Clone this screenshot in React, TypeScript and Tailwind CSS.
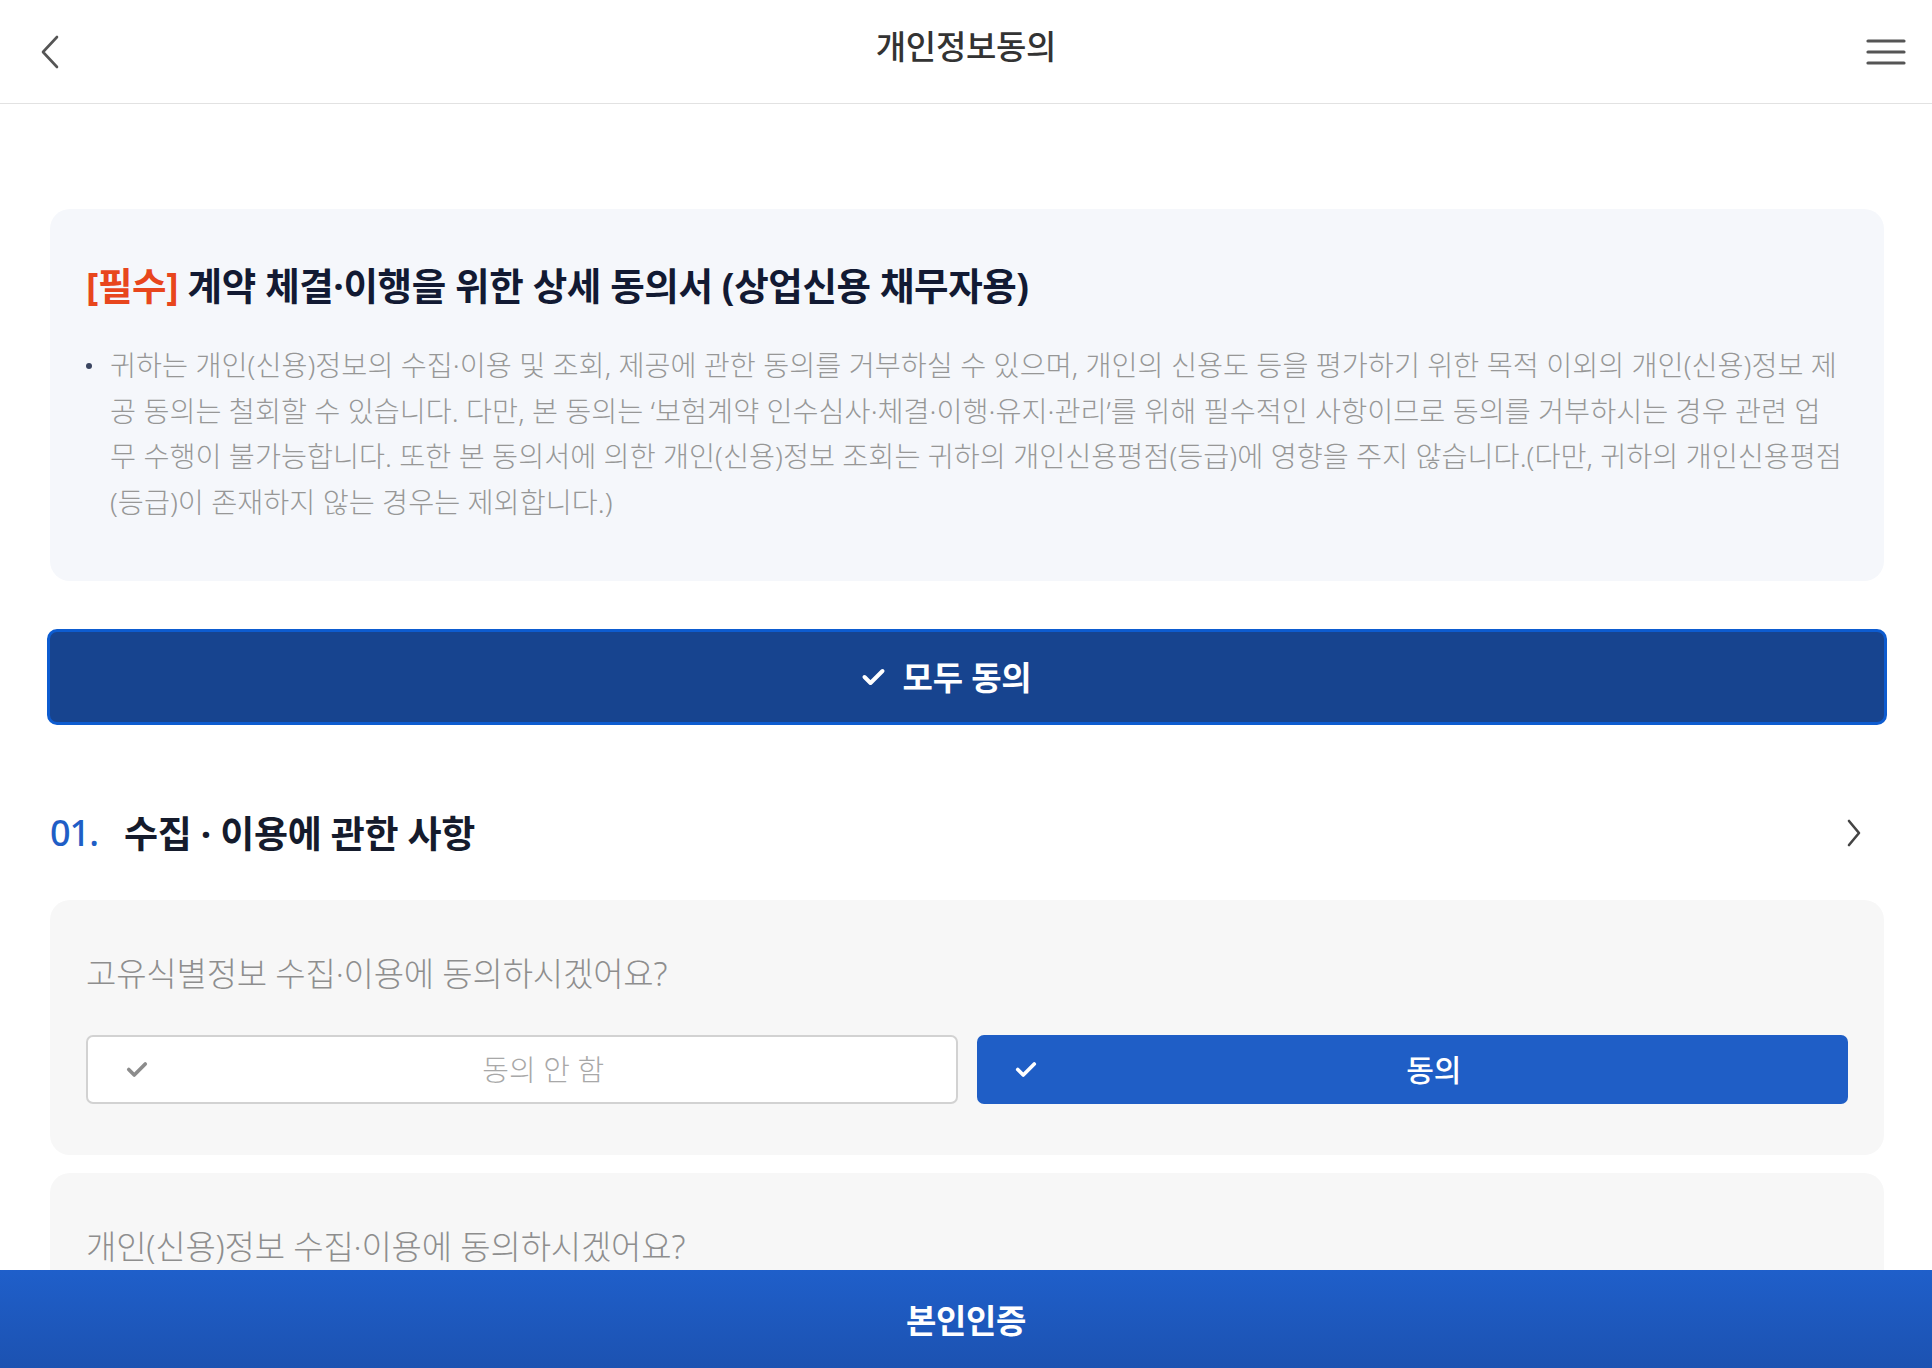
import React from 'react';

const font = "font-['Noto_Sans','Noto_Sans_CJK_KR',sans-serif]";

function CheckIcon({ className }: { className?: string }) {
    return (
        <svg className={className} viewBox="0 0 24 18" fill="none" stroke="currentColor" strokeWidth="4" strokeLinecap="round" strokeLinejoin="round">
            <polyline points="3,9 9,15 21,3" />
        </svg>
    );
}

const paragraph = [
    '귀하는 개인(신용)정보의 수집·이용 및 조회, 제공에 관한 동의를 거부하실 수 있으며, 개인의 신용도 등을 평가하기 위한 목적 이외의 개인(신용)정보 제',
    '공 동의는 철회할 수 있습니다. 다만, 본 동의는 ‘보험계약 인수심사·체결·이행·유지·관리’를 위해 필수적인 사항이므로 동의를 거부하시는 경우 관련 업',
    '무 수행이 불가능합니다. 또한 본 동의서에 의한 개인(신용)정보 조회는 귀하의 개인신용평점(등급)에 영향을 주지 않습니다.(다만, 귀하의 개인신용평점',
    '(등급)이 존재하지 않는 경우는 제외합니다.)',
];

function QuestionCard({ question }: { question: string }) {
    return (
        <div className="bg-[#f7f7f7] rounded-[20px] px-[36px] pt-[51px] pb-[51px]">
            <p className="text-[33px] font-light text-[#8e8e8e] leading-[46px] tracking-[-0.2px]">{question}</p>
            <div className="mt-[38px] grid grid-cols-2 gap-[19px]">
                <button className="relative h-[69px] rounded-[7px] bg-white border-2 border-[#d2d2d2] flex items-center justify-center pl-[43px]">
                    <CheckIcon className="absolute left-[38px] w-[22px] h-[17px] text-[#8c8c8c]" />
                    <span className="text-[29px] font-light text-[#a8a8a8]">동의 안 함</span>
                </button>
                <button className="relative h-[69px] rounded-[7px] bg-[#1f5ec6] flex items-center justify-center pl-[43px]">
                    <CheckIcon className="absolute left-[38px] w-[22px] h-[17px] text-white" />
                    <span className="text-[30px] font-medium text-white">동의</span>
                </button>
            </div>
        </div>
    );
}

export default function App() {
    return (
        <div className={`min-h-screen bg-white ${font}`}>
            {/* Header */}
            <header className="h-[104px] border-b-[1.5px] border-[#e2e2e2] grid grid-cols-[1fr_auto_1fr] items-center px-[40px]">
                <svg className="w-[20px] h-[34px] text-[#555]" viewBox="0 0 20 34" fill="none" stroke="currentColor" strokeWidth="2.6" strokeLinecap="round" strokeLinejoin="round">
                    <polyline points="17,2 3,17 17,32" />
                </svg>
                <h1 className="text-[33px] font-medium text-[#333] tracking-[-0.3px] pb-[10px]">개인정보동의</h1>
                <div className="flex justify-end -mr-[14px]">
                    <svg className="w-[40px] h-[26px] text-[#555]" viewBox="0 0 40 26" fill="none" stroke="currentColor" strokeWidth="3.2" strokeLinecap="round">
                        <line x1="2" y1="2" x2="38" y2="2" />
                        <line x1="2" y1="13" x2="38" y2="13" />
                        <line x1="2" y1="24" x2="38" y2="24" />
                    </svg>
                </div>
            </header>

            {/* Content */}
            <main className="pl-[50px] pr-[48px] pt-[105px] pb-[120px]">
                <section className="bg-[#f5f7fb] rounded-[20px] px-[36px] pt-[52px] pb-[56px]">
                    <h2 className="text-[37.5px] font-bold text-[#121a33] tracking-[-0.4px] leading-[50px]">
                        <span className="text-[#e8461d]">[필수]</span> 계약 체결·이행을 위한 상세 동의서 (상업신용 채무자용)
                    </h2>
                    <div className="mt-[32px] flex gap-[18px]">
                        <span className="mt-[20px] w-[6px] h-[6px] rounded-full bg-[#3a4560] shrink-0" />
                        <p className="text-[28.3px] font-light text-[#979797] leading-[45.6px] tracking-[0px] whitespace-nowrap">
                            {paragraph.map((line, i) => (
                                <span key={i} className="block">{line}</span>
                            ))}
                        </p>
                    </div>
                </section>

                <button className="mt-[48px] -mx-[3px] w-[calc(100%+6px)] h-[96px] rounded-[10px] bg-[#17448f] border-[3px] border-[#0d5cd0] flex items-center justify-center">
                    <span className="relative text-[33px] font-bold text-white tracking-[-0.2px]">
                        <CheckIcon className="absolute right-full mr-[16px] top-1/2 -translate-y-1/2 w-[25px] h-[18px] text-white" />
                        모두 동의
                    </span>
                </button>

                <div className="mt-[78px] mb-[37px] h-[60px] flex items-center justify-between">
                    <div className="flex items-center gap-[26px]">
                        <span className="text-[36px] text-[#1f5ec6] font-medium tracking-[-1px]">01.</span>
                        <span className="text-[37px] font-bold text-[#151b2c] tracking-[-0.3px]">수집 · 이용에 관한 사항</span>
                    </div>
                    <svg className="w-[16px] h-[28px] mr-[22px] text-[#444]" viewBox="0 0 16 28" fill="none" stroke="currentColor" strokeWidth="2.6" strokeLinecap="round" strokeLinejoin="round">
                        <polyline points="3,2 13,14 3,26" />
                    </svg>
                </div>

                <div className="flex flex-col gap-[18px]">
                    <QuestionCard question="고유식별정보 수집·이용에 동의하시겠어요?" />
                    <QuestionCard question="개인(신용)정보 수집·이용에 동의하시겠어요?" />
                </div>
            </main>

            {/* Bottom bar */}
            <div className="fixed left-0 right-0 bottom-0 h-[98px] bg-gradient-to-b from-[#1f5fca] to-[#1c52b1] flex items-center justify-center pt-[4px]">
                <span className="text-[33px] font-bold text-white tracking-[-0.3px]">본인인증</span>
            </div>
        </div>
    );
}
